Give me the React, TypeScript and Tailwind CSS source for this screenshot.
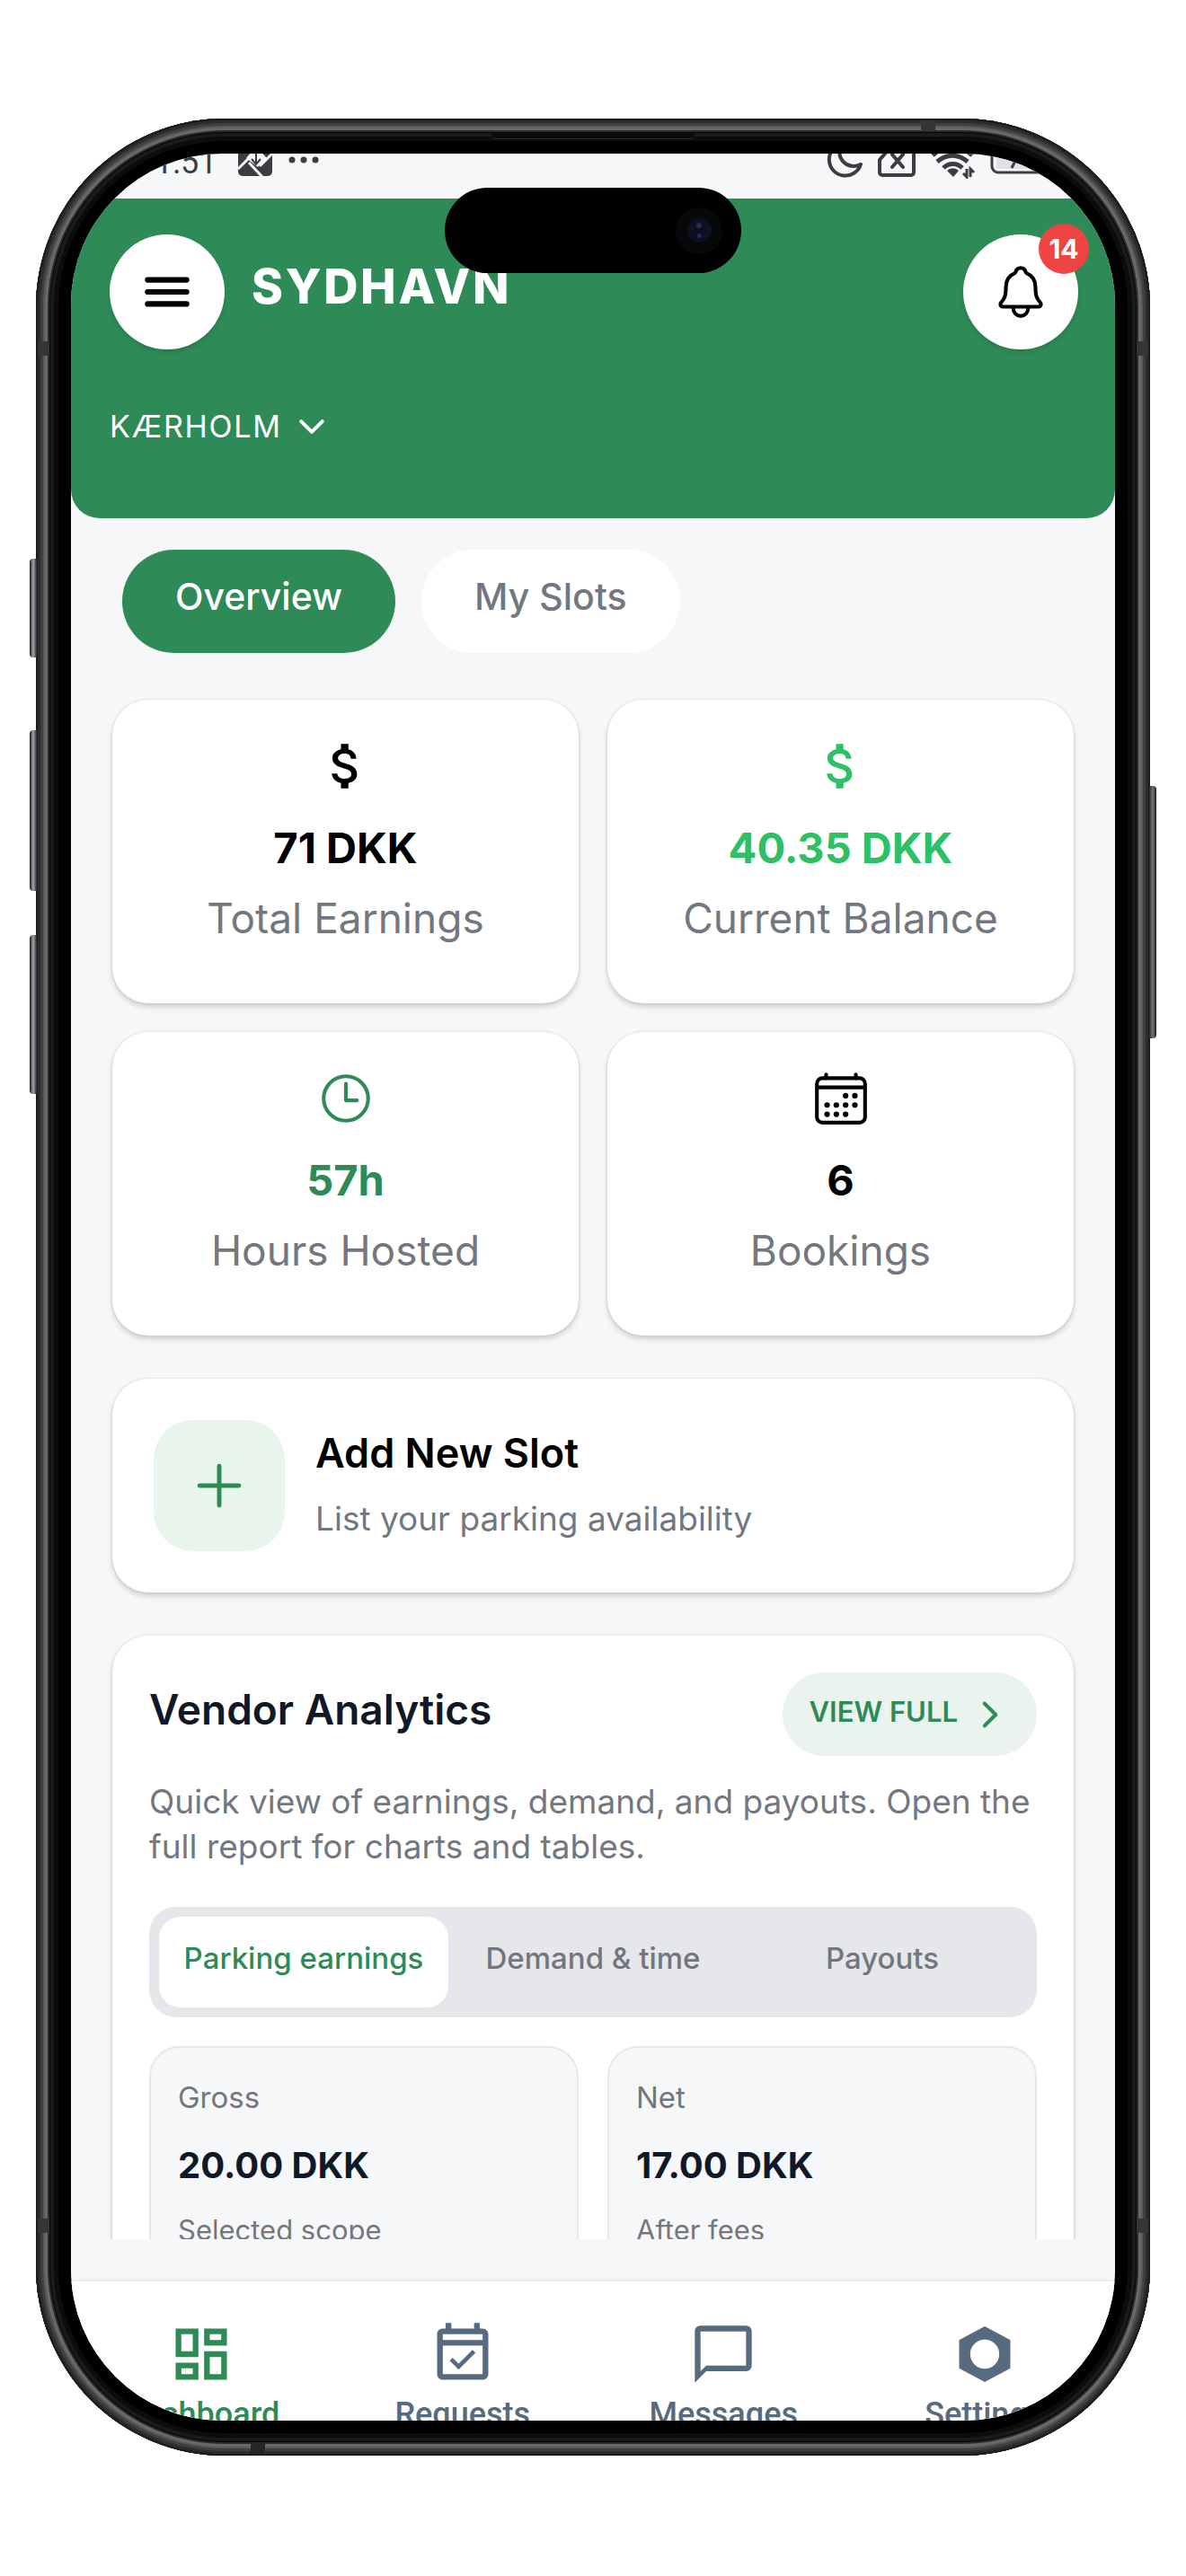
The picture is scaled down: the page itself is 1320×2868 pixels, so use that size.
import { useState } from "react";
import type { ReactNode } from "react";
import {
  IoAdd,
  IoCalendarOutline,
  IoChevronDown,
  IoChevronForward,
  IoMenu,
  IoNotificationsOutline,
  IoTimeOutline,
} from "react-icons/io5";
import {
  MdAttachMoney,
  MdChatBubbleOutline,
  MdOutlineDashboard,
  MdOutlineEventAvailable,
} from "react-icons/md";

const SettingsIcon = () => (
  <svg viewBox="0 0 24 24" width="76" height="76" fill="currentColor" aria-hidden="true">
    <path
      fillRule="evenodd"
      d="M12 2.2 21 7v10l-9 4.8L3 17V7l9-4.8Zm0 4.7a5.1 5.1 0 1 0 0 10.2 5.1 5.1 0 0 0 0-10.2Z"
    />
  </svg>
);

const stats = [
  { icon: <MdAttachMoney size={66} />, value: "71 DKK", label: "Total Earnings", color: "text-black" },
  { icon: <MdAttachMoney size={66} />, value: "40.35 DKK", label: "Current Balance", color: "text-[#2ec064]" },
  { icon: <IoTimeOutline size={66} />, value: "57h", label: "Hours Hosted", color: "text-[#2e8b57]" },
  { icon: <IoCalendarOutline size={66} />, value: "6", label: "Bookings", color: "text-black" },
];

const reports = ["Parking earnings", "Demand & time", "Payouts"];

const totals = [
  { title: "Gross", value: "20.00 DKK", note: "Selected scope" },
  { title: "Net", value: "17.00 DKK", note: "After fees" },
];

const navItems = [
  { label: "Dashboard", icon: <MdOutlineDashboard size={76} /> },
  { label: "Requests", icon: <MdOutlineEventAvailable size={76} /> },
  { label: "Messages", icon: <MdChatBubbleOutline size={76} /> },
  { label: "Settings", icon: <SettingsIcon /> },
];

const cardClass =
  "rounded-[40px] bg-white shadow-[0_0_3px_rgba(0,0,0,0.12),0_4px_6px_rgba(0,0,0,0.16)]";

const StatusBar = () => (
  <div className="flex h-[50px] shrink-0 items-end justify-between overflow-hidden pb-[22px] pl-[93px] pr-[59px] text-[#3c3d40]">
    <div className="flex items-end pb-[3px]">
      <span className="font-['Roboto'] text-[36px] leading-[30px]">1:51</span>
      <svg className="ml-6" width="110" height="38" viewBox="0 0 110 38" aria-hidden="true">
        <rect width="38" height="38" rx="5" fill="#3c3d40" />
        <path d="m20 5 12 13-10 10L9 18Z" fill="#f5f7f9" />
        <path d="M0 30 14 16M12 23l15 16M24 27 39 12" fill="none" stroke="#f5f7f9" strokeWidth="3" />
        <path d="M20 8v17m-5-6 5 6 5-6" fill="none" stroke="#3c3d40" strokeWidth="2" />
        <circle cx="60" cy="20" r="3.5" fill="#3c3d40" />
        <circle cx="73" cy="20" r="3.5" fill="#3c3d40" />
        <circle cx="86" cy="20" r="3.5" fill="#3c3d40" />
      </svg>
    </div>
    <svg width="262" height="44" viewBox="0 0 262 44" fill="none" stroke="#3c3d40" strokeWidth="4" aria-hidden="true">
      <path d="M17 5A18 18 0 1 0 38 28 16 16 0 0 1 17 5Z" strokeLinejoin="round" />
      <path d="M72 8h22a3 3 0 0 1 3 3v26a3 3 0 0 1-3 3H62a3 3 0 0 1-3-3V23Z" />
      <path d="m73 17 12 14m0-14L73 31" strokeWidth="4" strokeLinecap="round" />
      <path d="M118 18c13-12 31-12 44 0M123 25c11-9 23-9 34 0M130 32c6-6 15-6 21 0" strokeWidth="5" />
      <path d="m134 35 7 7 6-7a9 9 0 0 0-13 0Z" fill="#3c3d40" stroke="none" />
      <path d="M156 33v9l-4-4M160 42v-9l4 4" strokeWidth="3" />
      <rect x="184" y="4" width="70" height="33" rx="7" strokeWidth="3" />
      <rect x="189" y="8" width="40" height="25" rx="4" fill="#dfe1e5" stroke="none" />
      <path d="M203 12h13l-10 20" strokeWidth="3" />
    </svg>
  </div>
);

const Header = () => (
  <header className="shrink-0 rounded-b-[32px] bg-[#2e8b57] pb-[78px] pl-[43px] pr-[41px] pt-10 text-white">
    <div className="flex items-center justify-between">
      <div className="flex items-center gap-[30px]">
        <button
          aria-label="Menu"
          className="flex size-[128px] items-center justify-center rounded-full bg-white text-black shadow-md"
        >
          <IoMenu size={66} />
        </button>
        <h1 className="pb-3 text-[53px] font-extrabold leading-[60px] tracking-wider">SYDHAVN</h1>
      </div>
      <button
        aria-label="Notifications"
        className="relative flex size-[128px] items-center justify-center rounded-full bg-white text-black shadow-md"
      >
        <IoNotificationsOutline size={66} />
        <span className="absolute -right-3 -top-3 flex size-14 items-center justify-center rounded-full bg-[#ef4444] text-[30px] font-bold leading-none text-white">
          14
        </span>
      </button>
    </div>
    <button className="mt-[62px] flex items-center gap-3 text-[34px] leading-[48px] tracking-wider">
      KÆRHOLM
      <IoChevronDown size={42} />
    </button>
  </header>
);

const Card = ({ children, className = "" }: { children: ReactNode; className?: string }) => (
  <section className={`${cardClass} ${className}`}>{children}</section>
);

const Analytics = ({ report, setReport }: { report: string; setReport: (name: string) => void }) => (
  <Card className="mt-12 shrink-0 px-[41px] pb-10 pt-[41px] text-[#111827]">
    <div className="flex items-center justify-between">
      <h2 className="pb-3 text-[46px] font-semibold leading-[60px]">Vendor Analytics</h2>
      <a
        href="#report"
        className="flex h-[93px] items-center gap-[14px] rounded-full bg-[#eaf3ee] pl-[30px] pr-[30px] text-[31px] font-semibold text-[#2e8b57]"
      >
        <span className="pb-1">VIEW FULL</span>
        <IoChevronForward size={44} />
      </a>
    </div>
    <p className="mt-[26px] text-[37px] leading-[50px] text-[#737780]">
      Quick view of earnings, demand, and payouts. Open the full report for charts and tables.
    </p>
    <div className="mt-[42px] grid grid-cols-3 rounded-[30px] bg-[#e5e7eb] p-[11px]">
      {reports.map((name) => (
        <button
          key={name}
          onClick={() => setReport(name)}
          className={`${
            report === name ? "bg-white text-[#2e8b57]" : "text-[#73767d]"
          } whitespace-nowrap rounded-[24px] pb-2 text-[33px] font-medium leading-[93px]`}
        >
          {name}
        </button>
      ))}
    </div>
    <div className="mt-8 grid grid-cols-2 gap-8">
      {totals.map((t) => (
        <div key={t.title} className="rounded-[34px] border-2 border-[#e5e7eb] bg-[#f5f7f9] px-[30px] pb-8 pt-[31px]">
          <p className="text-[33px] leading-[48px] text-[#73767d]">{t.title}</p>
          <p className="mt-6 text-[40px] font-bold leading-[56px]">{t.value}</p>
          <p className="mt-6 text-[31px] leading-[40px] text-[#73767d]">{t.note}</p>
        </div>
      ))}
    </div>
  </Card>
);

// seams of the metal frame, side keys, earpiece and camera island
const FrameDetails = () => (
  <>
    <span className="absolute -left-[7px] top-[490px] h-[110px] w-2 rounded-l-[4px] bg-linear-to-r from-[#1b1b1d] via-[#a5a8ae] to-[#2a2a2c]" />
    <span className="absolute -left-[7px] top-[681px] h-[179px] w-2 rounded-l-[4px] bg-linear-to-r from-[#1b1b1d] via-[#a5a8ae] to-[#2a2a2c]" />
    <span className="absolute -left-[7px] top-[909px] h-[177px] w-2 rounded-l-[4px] bg-linear-to-r from-[#1b1b1d] via-[#a5a8ae] to-[#2a2a2c]" />
    <span className="absolute -right-[7px] top-[743px] h-[281px] w-2 rounded-r-[4px] bg-linear-to-r from-[#2a2a2c] via-[#77797c] to-[#1b1b1d]" />
    <span className="absolute left-[2px] top-[248px] h-4 w-[13px] bg-[#353535]" />
    <span className="absolute right-[2px] top-[248px] h-4 w-[13px] bg-[#353535]" />
    <span className="absolute bottom-[248px] left-[2px] h-4 w-[13px] bg-[#353535]" />
    <span className="absolute bottom-[248px] right-[2px] h-4 w-[13px] bg-[#353535]" />
    <span className="absolute right-[239px] top-[2px] h-[12px] w-4 bg-[#353535]" />
    <span className="absolute bottom-[2px] left-[239px] h-[12px] w-4 bg-[#252525]" />
    <span className="absolute left-1/2 top-[16px] h-[7px] w-[226px] -translate-x-1/2 rounded-b-[5px] border-b border-[#2c2c2e] bg-[#0b0b0b]" />
    <div className="absolute left-1/2 top-[77px] flex h-[95px] w-[330px] -translate-x-1/2 items-center justify-end rounded-full bg-black pr-[21px]">
      <span className="flex size-[52px] items-center justify-center rounded-full bg-[#07080a]">
        <span className="flex size-[27px] flex-col items-center justify-center gap-[6px] rounded-full bg-[#0c1020]">
          <span className="size-[6px] rounded-full bg-[#243150]" />
          <span className="size-[5px] rounded-full bg-[#1e2a5c]" />
        </span>
      </span>
    </div>
  </>
);

export const App = () => {
  const [tab, setTab] = useState("Overview");
  const [report, setReport] = useState("Parking earnings");
  const [page, setPage] = useState("Dashboard");

  return (
    <div className="min-h-screen bg-white px-10 py-[132px] font-['Inter',sans-serif]">
      <div className="relative aspect-[1240/2602] w-full rounded-[210px] bg-black p-[39px] shadow-[inset_0_0_0_2px_#1c1c1c,inset_0_0_0_5px_#2c2c2d,inset_0_0_0_8px_#3f4041,inset_0_0_0_10px_#58595b,inset_0_0_0_13px_#68696b,inset_0_0_0_15px_#2b2b2b,inset_0_0_0_16px_#050505,inset_0_0_0_20px_#1a1a1a,inset_0_0_0_25px_#0c0c0c]">
        {/* Screen */}
        <div className="flex h-full flex-col overflow-hidden rounded-[168px] bg-[#f5f7f9]">
          <StatusBar />
          <Header />

          {/* Scroll area */}
          <main className="mb-[47px] flex min-h-0 flex-1 flex-col overflow-hidden px-[46px]">
            <div className="mt-[35px] flex shrink-0 gap-[29px] pl-[11px]">
              {["Overview", "My Slots"].map((name) => (
                <button
                  key={name}
                  onClick={() => setTab(name)}
                  className={`${
                    tab === name ? "bg-[#2e8b57] text-white" : "bg-white text-[#737780]"
                  } rounded-full px-[59px] pb-[10px] text-[41px] font-medium leading-[105px]`}
                >
                  {name}
                </button>
              ))}
            </div>

            <div className="mt-[52px] grid shrink-0 grid-cols-2 gap-8">
              {stats.map((s) => (
                <Card key={s.label} className="flex flex-col items-center pb-[63px] pt-[41px]">
                  <div className={s.color}>{s.icon}</div>
                  <p className={`${s.color} mt-[26px] text-[47px] font-bold leading-[64px]`}>{s.value}</p>
                  <p className="mt-[14px] text-[46px] leading-[64px] text-[#737780]">{s.label}</p>
                </Card>
              ))}
            </div>

            <button className={`${cardClass} mt-12 flex shrink-0 items-center gap-[34px] p-[46px] text-left`}>
              <span className="flex size-[146px] items-center justify-center rounded-[44px] bg-[#e8f5ec] text-[#2e8b57]">
                <IoAdd size={78} />
              </span>
              <span className="flex flex-col gap-[18px] pb-1">
                <span className="text-[45px] font-semibold leading-[60px] text-black">Add New Slot</span>
                <span className="text-[37px] leading-[50px] text-[#737780]">List your parking availability</span>
              </span>
            </button>

            <Analytics report={report} setReport={setReport} />
          </main>

          {/* Bottom navigation */}
          <nav className="grid h-[155px] shrink-0 grid-cols-4 bg-white shadow-[0_-1px_6px_rgba(0,0,0,0.08)]">
            {navItems.map((item) => (
              <button
                key={item.label}
                onClick={() => setPage(item.label)}
                className={`${
                  page === item.label ? "text-[#2e8b57]" : "text-[#586a80]"
                } flex flex-col items-center pt-[43px] font-['Roboto'] text-[36px] font-medium leading-[44px]`}
              >
                {item.icon}
                <span className="mt-[7px]">{item.label}</span>
              </button>
            ))}
          </nav>
        </div>

        <FrameDetails />
      </div>
    </div>
  );
};

export default App;
